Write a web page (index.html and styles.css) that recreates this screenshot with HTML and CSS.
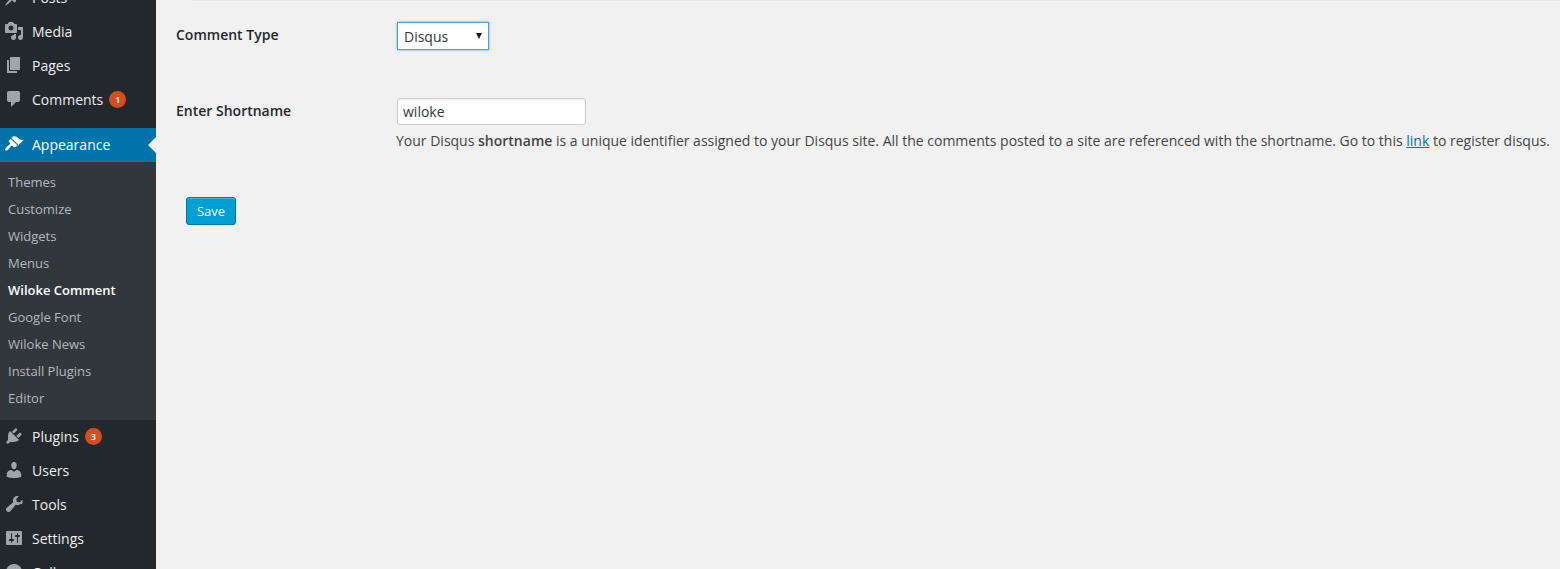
FILE: index.html
```html
<!DOCTYPE html>
<html lang="en">
<head>
<meta charset="utf-8">
<title>Wiloke Comment</title>
<link rel="stylesheet" href="styles.css">
</head>
<body>
<div class="admin">
  <nav class="sidebar">
    <ul class="menu">
      <li class="item"><svg class="icon" viewBox="0 0 20 20"><path d="M10.44 3.02l1.82-1.82 6.36 6.35-1.83 1.82c-1.05-.68-2.48-.57-3.41.36l-.75.75c-.92.93-1.04 2.35-.35 3.41l-1.83 1.82-2.41-2.41-2.8 2.79c-.42.42-3.38 2.71-3.8 2.29s1.86-3.39 2.28-3.81l2.79-2.79L4.1 9.36l1.83-1.82c1.05.69 2.48.57 3.4-.36l.75-.75c.93-.92 1.05-2.35.36-3.41z"/></svg><span>Posts</span></li>
      <li class="item"><svg class="icon" viewBox="0 0 20 20"><path d="M13 11V4c0-.55-.45-1-1-1h-1.67L9 1H5L3.67 3H2c-.55 0-1 .45-1 1v7c0 .55.45 1 1 1h10c.55 0 1-.45 1-1zM7 4.500c1.380 0 2.500 1.120 2.500 2.500S8.380 9.500 7 9.500 4.500 8.380 4.500 7 5.620 4.500 7 4.500zM14 6h5v10.500c0 1.380-1.120 2.500-2.500 2.500S14 17.880 14 16.500s1.120-2.500 2.500-2.500c.17 0 .34.020.5.050V9h-3V6zm-4 8.050V13h2v3.500c0 1.380-1.120 2.500-2.500 2.500S7 17.880 7 16.500 8.120 14 9.500 14c.17 0 .34.020.5.050z"/></svg><span>Media</span></li>
      <li class="item"><svg class="icon" viewBox="0 0 20 20"><path d="M6 15V2h10v13H6zm-1 1h8v2H3V5h2v11z"/></svg><span>Pages</span></li>
      <li class="item"><svg class="icon" viewBox="0 0 20 20"><path d="M5 2h9c1.100 0 2 .9 2 2v7c0 1.100-.9 2-2 2h-2l-5 5v-5H5c-1.100 0-2-.9-2-2V4c0-1.100.9-2 2-2z"/></svg><span>Comments</span><b class="badge">1</b></li>
      <li class="separator"></li>
      <li class="item current"><svg class="icon" viewBox="0 0 20 20"><path d="M14.480 11.060L7.410 3.990l1.500-1.500c.5-.56 2.300-.47 3.510.32 1.210.8 1.430 1.280 2.910 2.100 1.180.64 2.450 1.260 4.450.85zm-.71.710L6.700 4.700 4.930 6.470c-.39.39-.39 1.020 0 1.410l1.060 1.060c.39.39.39 1.030 0 1.420-.6.600-1.430 1.110-2.210 1.690-.35.260-.7.530-1.010.84C1.430 13.730.430 15.520 1.200 16.290c.78.780 2.570-.22 3.410-1.060.31-.31.580-.66.840-1.010.58-.78 1.090-1.610 1.690-2.210.39-.39 1.020-.39 1.410 0l1.060 1.060c.39.39 1.020.39 1.410 0z"/></svg><span>Appearance</span></li>
      <li class="submenu">
        <a>Themes</a>
        <a>Customize</a>
        <a>Widgets</a>
        <a>Menus</a>
        <a class="active">Wiloke Comment</a>
        <a>Google Font</a>
        <a>Wiloke News</a>
        <a>Install Plugins</a>
        <a>Editor</a>
      </li>
      <li class="item"><svg class="icon" viewBox="0 0 20 20"><path d="M13.110 4.360L9.870 7.600 8 5.730l3.240-3.240c.35-.34 1.050-.2 1.560.32.520.51.660 1.210.31 1.550zm-8 1.770l.91-1.120 9.010 9.010-1.190.84c-.71.710-2.630 1.160-3.820 1.160H6.140L4.900 17.260c-.59.590-1.540.59-2.120 0-.59-.58-.59-1.530 0-2.120l1.240-1.240v-3.880c0-1.130.4-3.180 1.090-3.890zm7.260 3.970l3.240-3.240c.34-.35 1.040-.21 1.550.31.520.51.660 1.210.31 1.550l-3.240 3.250z"/></svg><span>Plugins</span><b class="badge">3</b></li>
      <li class="item"><svg class="icon" viewBox="0 0 20 20"><path d="M10 9.250c-2.270 0-2.730-3.440-2.730-3.440C7 4.020 7.820 2 9.970 2c2.160 0 2.980 2.020 2.710 3.810 0 0-.41 3.440-2.680 3.440zm0 2.570L12.720 10c2.390 0 4.520 2.330 4.520 4.530v2.490s-3.650 1.130-7.240 1.130c-3.650 0-7.240-1.130-7.240-1.130v-2.490c0-2.250 1.940-4.480 4.470-4.480z"/></svg><span>Users</span></li>
      <li class="item"><svg class="icon" viewBox="0 0 20 20"><path d="M16.680 9.770c-1.340 1.340-3.300 1.670-4.950.99l-5.410 6.520c-.99.990-2.590.99-3.580 0s-.99-2.590 0-3.570l6.520-5.420c-.68-1.650-.35-3.610.99-4.950 1.280-1.280 3.120-1.640 4.730-1.100l-2.810 2.810.73 2.740 2.740.73 2.810-2.810c.54 1.610.18 3.450-1.100 4.730z"/></svg><span>Tools</span></li>
      <li class="item"><svg class="icon" viewBox="0 0 20 20"><path d="M18 16V4c0-.55-.45-1-1-1H3c-.55 0-1 .45-1 1v12c0 .55.45 1 1 1h14c.55 0 1-.45 1-1zM8 11h1c.55 0 1 .45 1 1s-.45 1-1 1H8v1.500c0 .28-.22.5-.5.5s-.5-.22-.5-.5V13H6c-.55 0-1-.45-1-1s.45-1 1-1h1V5.500c0-.28.22-.5.5-.5s.5.22.5.5V11zm5-2h-1c-.55 0-1-.45-1-1s.45-1 1-1h1V5.500c0-.28.22-.5.5-.5s.5.22.5.5V7h1c.55 0 1 .45 1 1s-.45 1-1 1h-1v5.500c0 .28-.22.5-.5.5s-.5-.22-.5-.5V9z"/></svg><span>Settings</span></li>
      <li class="item"><svg class="icon" viewBox="0 0 20 20"><circle cx="10" cy="10" r="8"/></svg><span>Collapse</span></li>
    </ul>
  </nav>
  <main class="content">
    <form class="form">
      <div class="row row-type">
        <label class="label">Comment Type</label>
        <div class="field"><div class="select"><span>Disqus</span><i class="caret"></i></div></div>
      </div>
      <div class="row row-name">
        <label class="label">Enter Shortname</label>
        <div class="field">
          <div class="input">wiloke</div>
          <p class="help">Your Disqus <strong>shortname</strong> is a unique identifier assigned to your Disqus site. All the comments posted to a site are referenced with the shortname. Go to this <a class="link">link</a> to register disqus.</p>
        </div>
      </div>
      <button type="button" class="save">Save</button>
    </form>
  </main>
</div>
</body>
</html>
```
FILE: styles.css
```css
* { box-sizing: border-box; }
html, body { margin: 0; height: 100%; overflow: hidden; }
body { background: #f1f1f1; color: #444; font-family: "Open Sans", sans-serif; font-size: 13px; }
.admin { display: flex; height: 569px; overflow: hidden; }
.sidebar { width: 156px; flex: none; background: #23282d; overflow: hidden; }
.menu { list-style: none; margin: -19px 0 0; padding: 0; }
.item { position: relative; display: flex; align-items: center; height: 34px; padding-bottom: 2px; color: #eee; font-size: 14px; }
.icon { width: 20px; height: 20px; margin: 0 8px 0 4px; fill: #a0a5aa; flex: none; }
.separator { height: 11px; }
.badge { display: flex; align-items: center; justify-content: center; width: 17px; height: 17px; margin-left: 6px; border-radius: 50%; background: #d54e21; color: #fff; font-size: 9px; font-weight: 600; }
.current { background: #0073aa; color: #fff; }
.current .icon { fill: #fff; }
.current::after { content: ""; position: absolute; right: 0; top: 50%; margin-top: -8px; border: 8px solid transparent; border-right-color: #f1f1f1; }
.submenu { display: flex; flex-direction: column; padding: 6px 0 9px; background: #32373c; }
.submenu a { display: flex; align-items: center; height: 27px; padding-left: 8px; color: #b4b9be; }
.submenu .active { color: #fff; font-weight: 600; }
.content { flex: 1; min-width: 0; position: relative; }
.content::before { content: ""; display: block; height: 1px; margin-left: 36px; background: #e9e9e9; }
.form { padding: 0 0 0 20px; }
.row { display: flex; }
.label { width: 220px; flex: none; color: #23282d; font-size: 14px; font-weight: 600; }
.row-type { padding-top: 21px; height: 97px; }
.row-type .label { padding-top: 3px; }
.select { display: flex; align-items: center; justify-content: space-between; width: 92px; height: 28px; padding: 0 6px; border: 1px solid #5b9dd9; background: #fff; color: #32373c; font-size: 14px; box-shadow: 0 0 2px rgba(30, 140, 190, .8); }
.caret { width: 0; height: 0; margin-right: 0; border: 3.500px solid transparent; border-top: 6px solid #111; border-bottom: 0; }
.row-name .label { padding-top: 3px; }
.field { flex: 1; min-width: 0; margin-left: 1px; }
.row-name { height: 99px; }
.input { width: 189px; height: 27px; padding: 0 5px; border: 1px solid #ccc; border-radius: 3px; background: #fff; color: #32373c; font-size: 14px; line-height: 26px; box-shadow: inset 0 1px 2px rgba(0, 0, 0, .07); }
.help { margin: 5px 0 0 -1px; color: #444; font-size: 14px; line-height: 22px; white-space: nowrap; }
.help strong { font-weight: 600; }
.link { color: #0073aa; text-decoration: underline; }
.save { display: block; width: 50px; height: 28px; margin-left: 10px; padding: 0; border: 1px solid #0073aa; border-radius: 3px; background: #00a0d2; color: #fff; font: 13px "Open Sans", sans-serif; box-shadow: inset 0 1px 0 rgba(120, 200, 230, .5); }
```
